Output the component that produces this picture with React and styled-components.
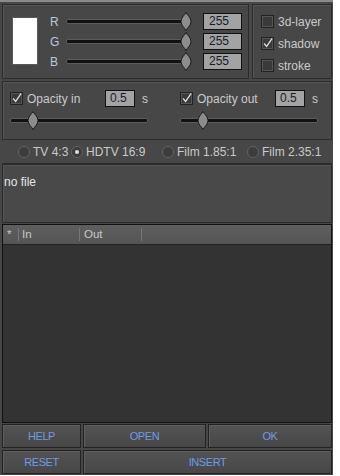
import styled, { createGlobalStyle } from "styled-components";

const Global = createGlobalStyle`
	body {
		margin: 0;
		background: #ffffff;
		font-family: "Liberation Sans", Arial, sans-serif;
	}
	* {
		box-sizing: border-box;
	}
`;

const Panel = styled.div`
	width: 333px;
	background: #474747;
	border-top: 2px solid #8a8a8a;
	padding: 2px 1px 1px 2px;
	display: flex;
	flex-direction: column;
`;

const TopRow = styled.div`
	display: flex;
	gap: 3px;
	height: 75px;
`;

const Group = styled.div`
	border: 1px solid #2b2b2b;
	box-shadow: inset 1px 1px 0 #555;
	display: flex;
`;

const ColorGroup = styled(Group)`
	width: 247px;
	padding: 8px 0 0 9px;
	gap: 12px;
`;

const Swatch = styled.div`
	width: 26px;
	height: 48px;
	margin-top: 4px;
	background: #fff;
	border: 1px solid #5a5a5a;
`;

const Channels = styled.div`
	display: flex;
	flex-direction: column;
	gap: 3px;
`;

const ChannelRow = styled.div`
	display: flex;
	align-items: center;
	height: 17px;
`;

const ChannelLabel = styled.span`
	width: 16px;
	font-size: 12px;
	color: #b8c8e0;
`;

const NumBox = styled.div`
	width: ${(p) => p.$w}px;
	height: 17px;
	background: #a3a3a3;
	border: 1px solid #111;
	color: #1a1a2a;
	font-size: 12px;
	line-height: 15px;
	padding-left: ${(p) => p.$pad}px;
`;

const Track = styled.div`
	position: relative;
	width: ${(p) => p.$w}px;
	height: 5px;
	background: #111;
	border: 1px solid #5c5c5c;
	border-radius: 2px;
	margin-right: ${(p) => p.$mr || 0}px;
`;

const Thumb = styled.svg`
	position: absolute;
	top: -8px;
	left: ${(p) => p.$x}px;
`;

const Slider = ({ w, x, mr }) => (
	<Track $w={w} $mr={mr}>
		<Thumb $x={x} width="12" height="19" viewBox="0 0 12 19">
			<path
				d="M6 0.5 C7.5 3.5 11 5.5 11 9.5 C11 13.5 7.5 15.5 6 18.5 C4.5 15.5 1 13.5 1 9.5 C1 5.5 4.5 3.5 6 0.5 Z"
				fill="#8c8c8c"
				stroke="#1a1a1a"
			/>
		</Thumb>
	</Track>
);

const OptionGroup = styled(Group)`
	flex: 1;
	flex-direction: column;
	padding: 9px 0 0 8px;
	gap: 7px;
`;

const Check = styled.label`
	display: flex;
	align-items: center;
	gap: 4px;
	font-size: 12px;
	color: #cacaca;
	height: 15px;
	white-space: nowrap;
	width: ${(p) => (p.$w ? `${p.$w}px` : "auto")};
`;

const Box = styled.span`
	width: 13px;
	height: 13px;
	flex: none;
	background: #3a3a3a;
	border: 1px solid #222;
	box-shadow: inset 0 0 0 1px #555;
	display: flex;
	align-items: center;
	justify-content: center;
`;

const CheckBox = ({ checked }) => (
	<Box>
		{checked && (
			<svg width="13" height="13" viewBox="0 0 13 13">
				<path d="M2.5 6.5 L5.5 10 L12 0.5" fill="none" stroke="#dedede" strokeWidth="1.5" />
			</svg>
		)}
	</Box>
);

const OpacityRow = styled(Group)`
	height: 59px;
	margin-top: 2px;
	padding: 8px 0 0 7px;
	gap: 32px;
`;

const OpacityCol = styled.div`
	display: flex;
	flex-direction: column;
	gap: 11px;
`;

const OpacityHead = styled.div`
	display: flex;
	align-items: center;
`;

const Unit = styled.span`
	font-size: 12px;
	color: #cacaca;
	margin-left: 7px;
`;

const RadioRow = styled.div`
	display: flex;
	align-items: center;
	height: 24px;
	padding-left: 16px;
	border-bottom: 1px solid #2b2b2b;
`;

const Radio = styled.label`
	display: flex;
	align-items: center;
	gap: 3px;
	width: ${(p) => p.$w}px;
	font-size: 12px;
	color: #cacaca;
	white-space: nowrap;
`;

const Dot = styled.span`
	width: 12px;
	height: 12px;
	flex: none;
	border-radius: 50%;
	border: 1px solid #626262;
	background: #3c3c3c;
	display: flex;
	align-items: center;
	justify-content: center;
	&::after {
		content: "";
		width: 4px;
		height: 4px;
		border-radius: 50%;
		background: ${(p) => (p.$on ? "#dddddd" : "transparent")};
	}
`;

const FileBox = styled(Group)`
	height: 59px;
	padding: 10px 0 0 1px;
	font-size: 12px;
	color: #e6e6e6;
	background: #494949;
`;

const Table = styled.div`
	margin-top: 1px;
	height: 199px;
	border: 1px solid #111;
	background: #333;
	display: flex;
	flex-direction: column;
`;

const Header = styled.div`
	height: 20px;
	display: flex;
	background: linear-gradient(#5e5e5e, #555);
	border-bottom: 1px solid #222;
`;

const HeadCell = styled.div`
	width: ${(p) => p.$w}px;
	border-right: 1px solid #777;
	margin: 3px 0;
	padding-left: ${(p) => p.$pad}px;
	font-size: 11.5px;
	color: #c8c8c8;
	line-height: 13px;
`;

const ButtonGrid = styled.div`
	display: grid;
	grid-template-columns: 79px 123px 1fr;
	grid-auto-rows: 24px;
	gap: 2px;
	margin-top: 1px;
`;

const Button = styled.button`
	grid-column: span ${(p) => p.$span || 1};
	background: linear-gradient(#535353, #474747);
	border: 1px solid #222;
	box-shadow: inset 1px 1px 0 #5e5e5e;
	color: #6c9ce6;
	font-family: "Liberation Sans", Arial, sans-serif;
	font-size: 11px;
	letter-spacing: -0.4px;
	padding: 0;
`;

export default function App() {
	return (
		<>
			<Global />
			<Panel>
				<TopRow>
					<ColorGroup>
						<Swatch />
						<Channels>
							{["R", "G", "B"].map((c) => (
								<ChannelRow key={c}>
									<ChannelLabel>{c}</ChannelLabel>
									<Slider w={120} x={113} mr={17} />
									<NumBox $w={39} $pad={5}>255</NumBox>
								</ChannelRow>
							))}
						</Channels>
					</ColorGroup>
					<OptionGroup>
						<Check><CheckBox />3d-layer</Check>
						<Check><CheckBox checked />shadow</Check>
						<Check><CheckBox />stroke</Check>
					</OptionGroup>
				</TopRow>
				<OpacityRow>
					<OpacityCol>
						<OpacityHead>
							<Check $w={95}><CheckBox checked />Opacity in</Check>
							<NumBox $w={30} $pad={4}>0.5</NumBox>
							<Unit>s</Unit>
						</OpacityHead>
						<Slider w={138} x={16} />
					</OpacityCol>
					<OpacityCol>
						<OpacityHead>
							<Check $w={95}><CheckBox checked />Opacity out</Check>
							<NumBox $w={30} $pad={4}>0.5</NumBox>
							<Unit>s</Unit>
						</OpacityHead>
						<Slider w={138} x={16} />
					</OpacityCol>
				</OpacityRow>
				<RadioRow>
					<Radio $w={53}><Dot />TV 4:3</Radio>
					<Radio $w={91}><Dot $on />HDTV 16:9</Radio>
					<Radio $w={85}><Dot />Film 1.85:1</Radio>
					<Radio $w={80}><Dot />Film 2.35:1</Radio>
				</RadioRow>
				<FileBox>no file</FileBox>
				<Table>
					<Header>
						<HeadCell $w={16} $pad={4}>*</HeadCell>
						<HeadCell $w={61} $pad={3}>In</HeadCell>
						<HeadCell $w={62} $pad={4}>Out</HeadCell>
					</Header>
				</Table>
				<ButtonGrid>
					<Button>HELP</Button>
					<Button>OPEN</Button>
					<Button>OK</Button>
					<Button>RESET</Button>
					<Button $span={2}>INSERT</Button>
				</ButtonGrid>
			</Panel>
		</>
	);
}
